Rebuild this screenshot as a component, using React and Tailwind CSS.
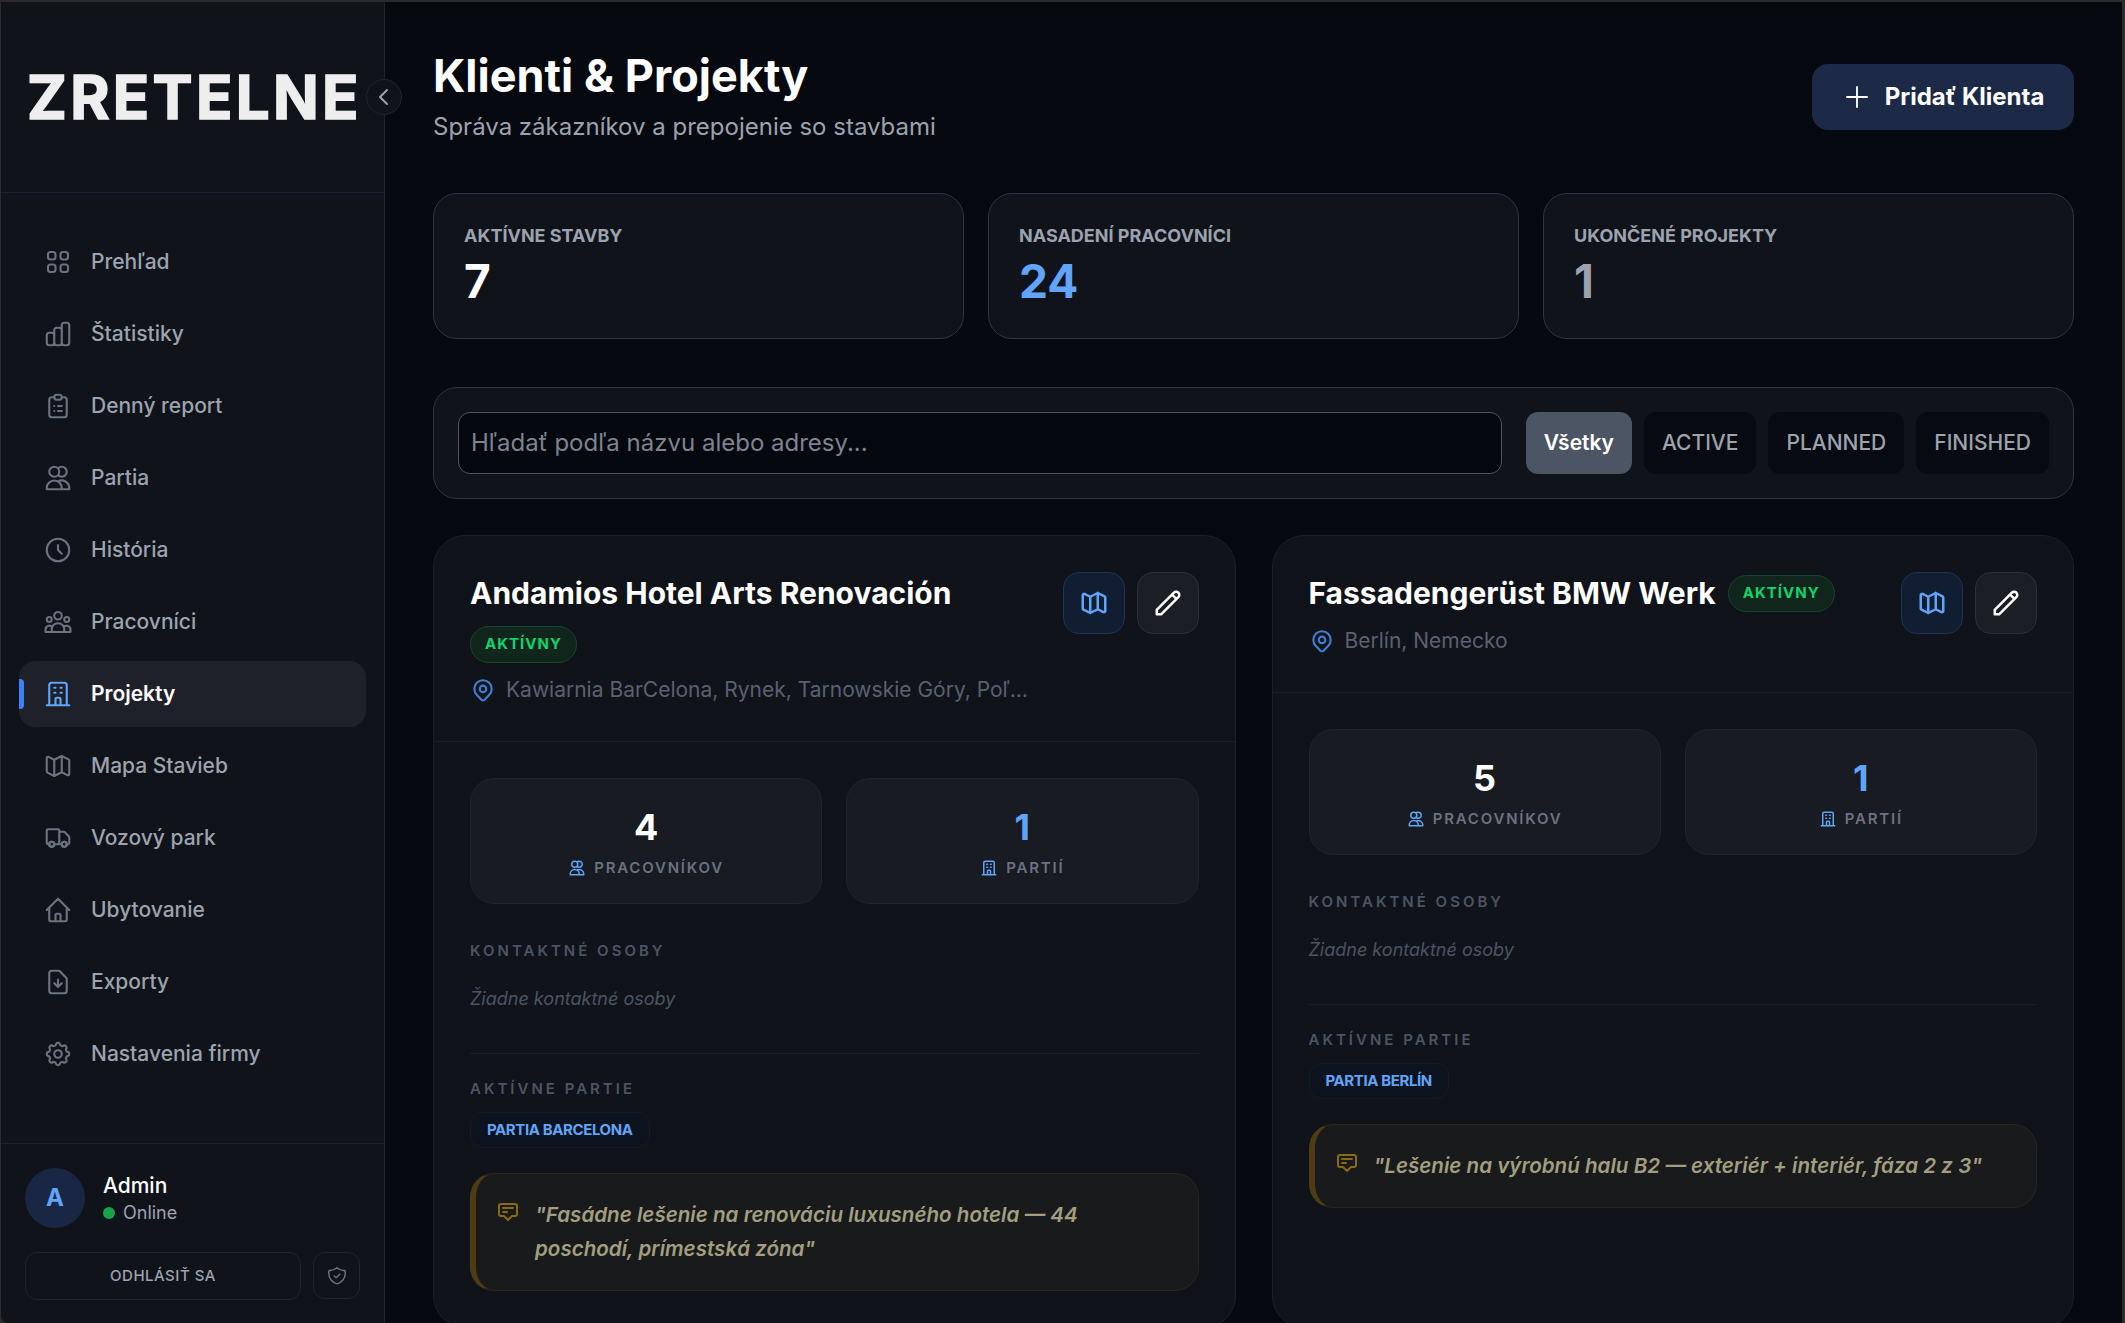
import React from "react";
import {
  HiOutlineViewGrid,
  HiOutlineChartBar,
  HiOutlineClipboardList,
  HiOutlineUsers,
  HiOutlineClock,
  HiOutlineUserGroup,
  HiOutlineOfficeBuilding,
  HiOutlineMap,
  HiOutlineTruck,
  HiOutlineHome,
  HiOutlineDocumentDownload,
  HiOutlineCog,
  HiOutlineChevronLeft,
  HiOutlinePlus,
  HiOutlineLocationMarker,
  HiOutlinePencil,
  HiOutlineAnnotation,
  HiOutlineShieldCheck,
} from "react-icons/hi";

const navItems = [
  { label: "Prehľad", icon: HiOutlineViewGrid },
  { label: "Štatistiky", icon: HiOutlineChartBar },
  { label: "Denný report", icon: HiOutlineClipboardList },
  { label: "Partia", icon: HiOutlineUsers },
  { label: "História", icon: HiOutlineClock },
  { label: "Pracovníci", icon: HiOutlineUserGroup },
  { label: "Projekty", icon: HiOutlineOfficeBuilding, active: true },
  { label: "Mapa Stavieb", icon: HiOutlineMap },
  { label: "Vozový park", icon: HiOutlineTruck },
  { label: "Ubytovanie", icon: HiOutlineHome },
  { label: "Exporty", icon: HiOutlineDocumentDownload },
  { label: "Nastavenia firmy", icon: HiOutlineCog },
];

const Sidebar = () => (
  <aside className="relative flex h-full w-[384px] shrink-0 flex-col border-r border-[#1d2230] bg-[#10131a]">
    <div className="flex h-[191px] shrink-0 items-center border-b border-[#1d2230] pl-[26px]">
      <span className="text-[60px] leading-none font-bold tracking-[3.3px] text-[#eeeeee] [-webkit-text-stroke:1.5px_#eeeeee]">ZRETELNE</span>
    </div>
    <button className="absolute top-[77px] -right-[18px] z-10 flex h-9 w-9 items-center justify-center rounded-full border border-[#1f2533] bg-[#10131a] text-[#9ca3af]">
      <HiOutlineChevronLeft className="h-6 w-6" />
    </button>

    <nav className="flex flex-1 flex-col gap-1.5 px-[18px] pt-9">
      {navItems.map((item) => {
        const Icon = item.icon;
        return (
          <div
            key={item.label}
            className={`relative flex h-[66px] items-center gap-[18px] rounded-2xl pl-[24px] text-[21px] ${
              item.active ? "bg-[#1e2129] font-semibold text-white" : "font-medium text-[#9ca3af]"
            }`}
          >
            {item.active && <span className="absolute top-[18px] left-0 h-[30px] w-[5px] rounded-r bg-[#3b82f6]" />}
            <Icon className={`h-[30px] w-[30px] [&_path]:stroke-[1.7] ${item.active ? "text-[#60a5fa]" : "text-[#6b7280]"}`} />
            {item.label}
          </div>
        );
      })}
    </nav>

    <div className="shrink-0 border-t border-[#1d2230] px-6 pt-6">
      <div className="flex items-center gap-[18px]">
        <div className="flex h-[60px] w-[60px] items-center justify-center rounded-full bg-[#1a2744] text-[24px] font-bold text-[#60a5fa]">A</div>
        <div>
          <div className="text-[21px] leading-[28px] font-medium text-white">Admin</div>
          <div className="mt-px flex items-center gap-2 text-[18px] leading-[24px] text-[#9ca3af]">
            <span className="h-3 w-3 rounded-full bg-[#16a34a]" />
            Online
          </div>
        </div>
      </div>
      <div className="mt-6 flex gap-3 pb-[23px]">
        <button className="h-[48px] w-[276px] rounded-xl border border-[#1f2533] text-[15px] font-medium tracking-[0.5px] text-[#9ca3af]">ODHLÁSIŤ SA</button>
        <button className="flex h-[47px] w-[47px] items-center justify-center rounded-xl border border-[#1f2533] text-[#6b7280]">
          <HiOutlineShieldCheck className="h-[22px] w-[22px] [&_path]:stroke-[1.6]" />
        </button>
      </div>
    </div>
  </aside>
);

const StatCard = ({ label, value, color }) => (
  <div className="h-[146px] rounded-3xl border border-[#2d3644] bg-[#10131a] px-[30px] pt-[30px]">
    <div className="text-[18px] leading-6 font-bold text-[#9ca3af]">{label}</div>
    <div className={`mt-[5px] text-[46px] leading-[56px] font-bold ${color}`}>{value}</div>
  </div>
);

const Filter = ({ children, active }) => (
  <button
    className={`h-[62px] rounded-xl px-[18px] text-[21px] ${
      active ? "bg-[#4b5563] font-semibold text-white" : "bg-[#070a11] font-medium text-[#9ca3af]"
    }`}
  >
    {children}
  </button>
);

const Badge = () => (
  <span className="inline-flex h-[37px] w-[107px] shrink-0 items-center justify-center rounded-full border border-[#14472b] bg-[#10261d] text-[15px] font-bold tracking-[1px] text-[#10d46c]">
    AKTÍVNY
  </span>
);

const SmallStat = ({ value, label, icon: Icon, color }) => (
  <div className="flex h-[126px] flex-col items-center rounded-3xl border border-[#20242d] bg-[#181b22] pt-[28px]">
    <div className={`text-[36px] leading-[40px] font-bold ${color}`}>{value}</div>
    <div className="mt-[11px] flex items-center gap-2 text-[15px] leading-5 font-semibold tracking-[1.8px] text-[#6b7280]">
      <Icon className="h-[18px] w-[18px] text-[#60a5fa]" />
      {label}
    </div>
  </div>
);

const SectionLabel = ({ children }) => (
  <div className="text-[15px] leading-5 font-semibold tracking-[3px] text-[#4b5563]">{children}</div>
);

const ProjectCard = ({ name, address, inlineBadge, workers, crew, note }) => (
  <div className="rounded-[32px] border border-[#1b1f28] bg-[#10131a]">
    <div className="flex justify-between border-b border-[#1b1f28] px-9 pt-9 pb-[35px]">
      <div className="min-w-0">
        <div className="flex items-center gap-3">
          <h3 className="text-[30px] leading-[43px] font-bold whitespace-nowrap text-white">{name}</h3>
          {inlineBadge && <Badge />}
        </div>
        {!inlineBadge && (
          <div className="mt-[11px] flex">
            <Badge />
          </div>
        )}
        <div className={`flex items-center gap-[10px] text-[21px] leading-[32px] text-[#5a6170] ${inlineBadge ? "mt-[10px]" : "mt-[11px]"}`}>
          <HiOutlineLocationMarker className="h-[26px] w-[26px] shrink-0 text-[#3f7fcf]" />
          <span className="max-w-[526px] truncate">{address}</span>
        </div>
      </div>
      <div className="flex shrink-0 gap-3">
        <button className="flex h-[62px] w-[62px] items-center justify-center rounded-2xl border border-[#1c3557] bg-[#111d30] text-[#60a5fa]">
          <HiOutlineMap className="h-[30px] w-[30px]" />
        </button>
        <button className="flex h-[62px] w-[62px] items-center justify-center rounded-2xl border border-[#2d3036] bg-[#1b1e25] text-white">
          <HiOutlinePencil className="h-[30px] w-[30px]" />
        </button>
      </div>
    </div>
    <div className="p-9">
      <div className="grid grid-cols-2 gap-6">
        <SmallStat value={workers} label="PRACOVNÍKOV" icon={HiOutlineUsers} color="text-white" />
        <SmallStat value={crew.count} label="PARTIÍ" icon={HiOutlineOfficeBuilding} color="text-[#60a5fa]" />
      </div>
      <div className="mt-[37px]">
        <SectionLabel>KONTAKTNÉ OSOBY</SectionLabel>
        <div className="mt-[24px] text-[18px] leading-7 text-[#4b5563] italic">Žiadne kontaktné osoby</div>
      </div>
      <div className="mt-[40px] border-t border-[#1b1f28] pt-[25px]">
        <SectionLabel>AKTÍVNE PARTIE</SectionLabel>
        <span className="mt-[13px] inline-flex h-[36px] items-center rounded-xl border border-[#141b28] bg-[#0e141f] px-4 text-[15px] font-bold tracking-[-0.4px] text-[#60a5fa]">
          {crew.name}
        </span>
      </div>
      <div className="mt-[25px] flex gap-[15px] rounded-3xl border border-[#2a2718] border-l-[6px] border-l-[#4d3c14] bg-[#181a1b] py-[24px] pr-6 pl-[20px]">
        <HiOutlineAnnotation className="mt-[2px] h-6 w-6 shrink-0 text-[#8a6a14]" />
        <p className="text-[20.6px] leading-[34px] font-semibold text-[#a39e80] italic">{note}</p>
      </div>
    </div>
  </div>
);

export default function App() {
  return (
    <div className="h-[1323px] w-[2125px] overflow-hidden bg-[#2b2b2b] font-['Inter',sans-serif]">
      <div className="mt-0.5 ml-px flex h-[1321px] w-[2121px] overflow-hidden rounded-bl-lg bg-[#060910]">
        <Sidebar />
        <main className="min-w-0 flex-1 pt-[50px] pr-12 pl-12">
          <div className="flex items-center justify-between">
            <div>
              <h1 className="text-[45px] leading-[48px] font-bold text-white">Klienti &amp; Projekty</h1>
              <p className="mt-[11px] text-[24px] leading-[32px] text-[#9ca3af]">Správa zákazníkov a prepojenie so stavbami</p>
            </div>
            <button className="mb-0.5 flex h-[66px] w-[262px] items-center justify-center gap-[13px] rounded-2xl bg-[#1c2a47] text-[24px] font-bold text-white">
              <HiOutlinePlus className="h-[30px] w-[30px] [&_path]:stroke-[1.5]" />
              Pridať Klienta
            </button>
          </div>

          <div className="mt-[50px] grid grid-cols-3 gap-6">
            <StatCard label="AKTÍVNE STAVBY" value="7" color="text-white" />
            <StatCard label="NASADENÍ PRACOVNÍCI" value="24" color="text-[#60a5fa]" />
            <StatCard label="UKONČENÉ PROJEKTY" value="1" color="text-[#9ca3af]" />
          </div>

          <div className="mt-12 flex h-[112px] items-center gap-6 rounded-3xl border border-[#2d3644] bg-[#10131a] px-6">
            <input
              placeholder="Hľadať podľa názvu alebo adresy..."
              className="h-[62px] min-w-0 flex-1 rounded-xl border border-[#4b5563] bg-[#05080f] px-3 pb-0.5 text-[24px] text-white outline-none placeholder:text-[#7d8490]"
            />
            <div className="flex gap-3">
              <Filter active>Všetky</Filter>
              <Filter>ACTIVE</Filter>
              <Filter>PLANNED</Filter>
              <Filter>FINISHED</Filter>
            </div>
          </div>

          <div className="mt-9 grid grid-cols-2 items-stretch gap-9">
            <ProjectCard
              name="Andamios Hotel Arts Renovación"
              address="Kawiarnia BarCelona, Rynek, Tarnowskie Góry, Poľsko"
              workers="4"
              crew={{ count: "1", name: "PARTIA BARCELONA" }}
              note={'"Fasádne lešenie na renováciu luxusného hotela — 44 poschodí, prímestská zóna"'}
            />
            <ProjectCard
              inlineBadge
              name="Fassadengerüst BMW Werk"
              address="Berlín, Nemecko"
              workers="5"
              crew={{ count: "1", name: "PARTIA BERLÍN" }}
              note={'"Lešenie na výrobnú halu B2 — exteriér + interiér, fáza 2 z 3"'}
            />
          </div>
        </main>
      </div>
    </div>
  );
}
